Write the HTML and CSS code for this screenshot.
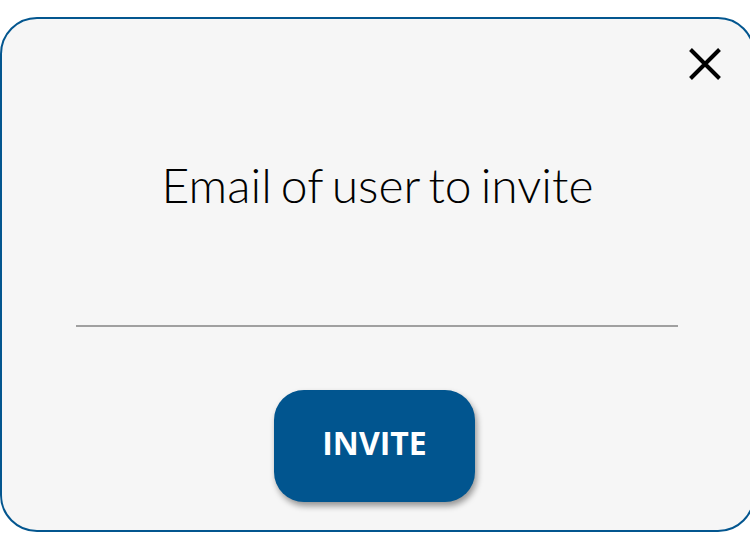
FILE: index.html
```html
<!DOCTYPE html>
<html>
<head>
<meta charset="utf-8">
<link rel="stylesheet" href="styles.css">
</head>
<body>
<div class="card">
  <button class="close" aria-label="Close">
    <svg width="34" height="32" viewBox="0 0 34 32"><path d="M2.5 1.5 L31.5 30.5 M31.5 1.5 L2.5 30.5" stroke="#000" stroke-width="4" stroke-linecap="butt" fill="none"/></svg>
  </button>
  <h2 class="title">Email of user to invite</h2>
  <input class="field" type="email">
  <button class="invite">INVITE</button>
</div>
</body>
</html>
```
FILE: styles.css
```css
html, body {
  margin: 0;
  padding: 0;
  background: #ffffff;
  overflow: hidden;
}
.card {
  box-sizing: border-box;
  margin-top: 17px;
  width: 755px;
  height: 515px;
  border: 2px solid #03568f;
  border-radius: 37px;
  background: #f6f6f6;
  position: relative;
  display: flex;
  flex-direction: column;
  align-items: center;
}
.close {
  position: absolute;
  top: 29px;
  left: 686px;
  width: 34px;
  height: 32px;
  padding: 0;
  border: none;
  background: none;
}
.close svg { display: block; }
.title {
  margin: 137px 0 0 0;
  font-family: Lato, sans-serif;
  font-weight: 300;
  font-size: 48px;
  line-height: 58px;
  word-spacing: -4px;
  color: #000;
}
.field {
  box-sizing: border-box;
  margin-top: 71px;
  align-self: stretch;
  margin-left: 74px;
  margin-right: 75px;
  height: 42px;
  border: none;
  border-bottom: 2px solid #a0a0a0;
  background: transparent;
  outline: none;
}
.invite {
  margin-top: 63px;
  margin-right: 6px;
  width: 201px;
  height: 112px;
  padding: 0 0 7px 0;
  border: none;
  border-radius: 30px;
  background: #01558f;
  color: #fff;
  font-family: "Open Sans", sans-serif;
  font-weight: 700;
  font-size: 32px;
  box-shadow: 2px 4px 6px rgba(0,0,0,0.4);
}
```
